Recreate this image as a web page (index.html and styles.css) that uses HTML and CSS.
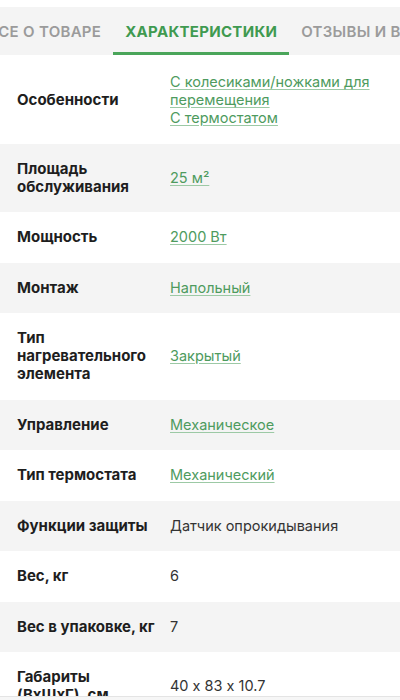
FILE: index.html
```html
<!DOCTYPE html>
<html lang="ru">
<head>
    <meta charset="UTF-8">
    <meta name="viewport" content="width=device-width, initial-scale=1.0">
    <title>Характеристики</title>
    <link rel="stylesheet" href="styles.css">
</head>
<body>

    <div class="tabs">
        <div class="tabs-track">
            <a class="tab" href="#">Все о товаре</a>
            <a class="tab active" href="#">Характеристики</a>
            <a class="tab" href="#">Отзывы и вопросы</a>
        </div>
    </div>

    <div class="specs">
        <div class="row">
            <div class="name">Особенности</div>
            <div class="value">
                <a href="#">С колесиками/ножками для перемещения</a><br>
                <a href="#">С термостатом</a>
            </div>
        </div>
        <div class="row">
            <div class="name">Площадь обслуживания</div>
            <div class="value"><a href="#">25 м²</a></div>
        </div>
        <div class="row">
            <div class="name">Мощность</div>
            <div class="value"><a href="#">2000 Вт</a></div>
        </div>
        <div class="row">
            <div class="name">Монтаж</div>
            <div class="value"><a href="#">Напольный</a></div>
        </div>
        <div class="row">
            <div class="name">Тип нагревательного элемента</div>
            <div class="value"><a href="#">Закрытый</a></div>
        </div>
        <div class="row">
            <div class="name">Управление</div>
            <div class="value"><a href="#">Механическое</a></div>
        </div>
        <div class="row">
            <div class="name">Тип термостата</div>
            <div class="value"><a href="#">Механический</a></div>
        </div>
        <div class="row">
            <div class="name">Функции защиты</div>
            <div class="value">Датчик опрокидывания</div>
        </div>
        <div class="row">
            <div class="name">Вес, кг</div>
            <div class="value">6</div>
        </div>
        <div class="row">
            <div class="name">Вес в упаковке, кг</div>
            <div class="value">7</div>
        </div>
        <div class="row">
            <div class="name">Габариты (ВхШхГ), см</div>
            <div class="value">40 x 83 x 10.7</div>
        </div>
    </div>

    <div class="bottom-bar"></div>

</body>
</html>
```

FILE: styles.css
```css
body {
    margin: 0;
    font-family: Inter, "Noto Sans", sans-serif;
    font-feature-settings: "calt" 0;
    background: #fff;
    color: #1e1e1e;
}

.tabs {
    margin-top: 7px;
    background: #f4f4f4;
    overflow: hidden;
}

.tabs-track {
    display: flex;
    margin-left: -24px;
    white-space: nowrap;
}

.tab {
    display: block;
    padding: 15px 12px 11px;
    font-size: 15px;
    font-weight: 600;
    letter-spacing: 0.3px;
    text-transform: uppercase;
    color: #9b9b9b;
    text-decoration: none;
    border-bottom: 3px solid transparent;
}

.tab.active {
    color: #3f9a50;
    font-weight: 700;
    border-bottom-color: #4aa55a;
}

.specs {
    margin-top: 2px;
}

.row {
    display: flex;
    align-items: center;
    padding: 16px 17px 16.5px;
    font-size: 15px;
    line-height: 18px;
}

.row:nth-child(even) {
    background: #f4f4f4;
}

.name {
    width: 138px;
    margin-right: 15px;
    flex-shrink: 0;
    font-weight: 700;
    color: #1e1e1e;
}

.value {
    flex: 1;
    font-size: 14.5px;
    color: #333;
}

.value a {
    color: #4e9b5e;
    text-decoration: underline;
    text-decoration-color: #9cc9a5;
    text-underline-offset: 2px;
}

.bottom-bar {
    position: fixed;
    left: 0;
    right: 0;
    bottom: 0;
    height: 3px;
    background: #f6f6f6;
    border-top: 1px solid #e4e4e4;
}
```
